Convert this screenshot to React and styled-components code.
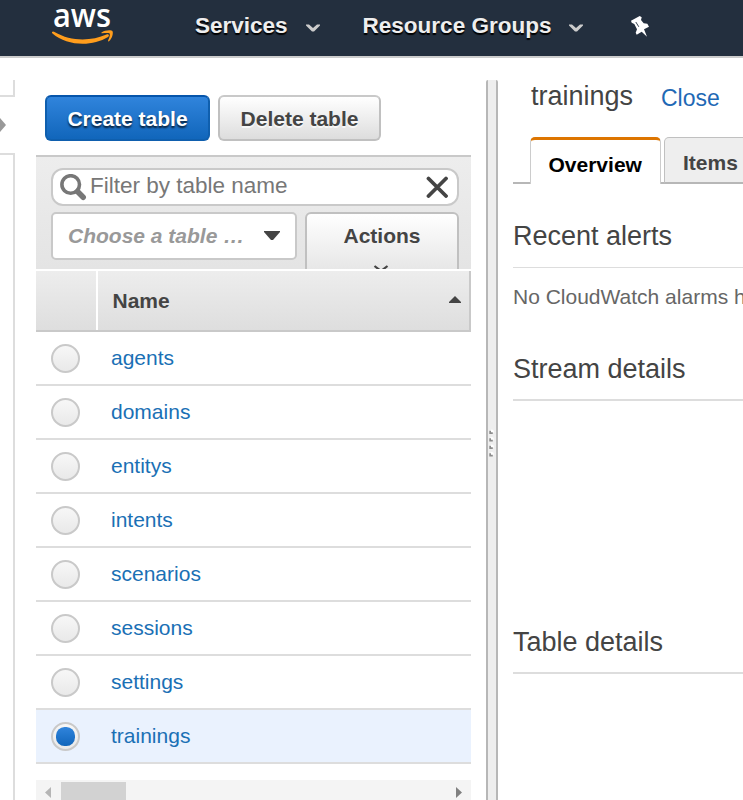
import React from "react";
import styled, { createGlobalStyle, css } from "styled-components";

const GlobalStyle = createGlobalStyle`
  * { box-sizing: border-box; }
  body { margin: 0; background: #fff; overflow: hidden; }
  button, input { font: inherit; }
`;

const Page = styled.div`
  width: 743px;
  height: 800px;
  overflow: hidden;
  background: #fff;
  color: #444;
  font: 21px/24px "Liberation Sans", Arial, sans-serif;
  white-space: nowrap;
`;

const NavBar = styled.header`
  display: flex;
  height: 58px;
  background: #232f3e;
  border-bottom: 2px solid #ccc;
`;

const Logo = styled.svg`
  display: block;
  width: 72px;
  height: 50px;
  margin-left: 48px;
  overflow: visible;
`;

const LogoText = styled.text`
  font: 600 32px "Open Sans", sans-serif;
  fill: #fff;
`;

const NavItem = styled.a`
  display: flex;
  height: 51px;
  margin-left: ${(p) => p.$gap}px;
  color: #eee;
  font-size: 22.5px;
  font-weight: bold;
  line-height: 51px;
  text-shadow: 0 2px 1px #000;
`;

const NavChevron = styled.svg`
  width: 14px;
  height: 8px;
  margin: 24px 0 0 18px;
`;

const PinIcon = styled.svg`
  width: 20px;
  height: 22px;
  margin: 15px 0 0 47px;
`;

const Workspace = styled.div`
  display: grid;
  grid-template-columns: 36px 450px 12px 1fr;
  height: 742px;
`;

const Rail = styled.div`
  display: flex;
  flex-direction: column;
  padding-top: 22px;
`;

const RailTop = styled.div`
  width: 15px;
  height: 17px;
  border: solid #ddd;
  border-width: 0 2px 2px 0;
`;

const RailGap = styled.div`
  display: flex;
  align-items: center;
  height: 56px;
`;

const RailBottom = styled.div`
  width: 15px;
  flex: 1;
  border: solid #ddd;
  border-width: 2px 2px 0 0;
`;

const TablesPane = styled.section`
  padding-top: 37px;
`;

const ButtonRow = styled.div`
  display: flex;
  gap: 8px;
  padding-left: 9px;
`;

const Button = styled.button`
  height: 46px;
  width: ${(p) => p.$width}px;
  padding: 2px 0 0;
  border-radius: 6px;
  font-weight: bold;
  line-height: 40px;
  ${(p) =>
    p.$primary
      ? css`
          color: #fff;
          background: linear-gradient(#3084dc, #1166bb);
          border: 2px solid #0f5fae;
          border-top-color: #0655ab;
          text-shadow: 0 2px 2px rgba(0, 0, 0, 0.75);
        `
      : css`
          color: #444;
          background: linear-gradient(#fff, #ddd);
          border: 2px solid #c0c0c0;
          border-top-color: #c9c9c9;
          text-shadow: 0 2px 0 rgba(255, 255, 255, 0.7);
        `}
`;

const FilterPanel = styled.div`
  display: flex;
  flex-direction: column;
  gap: 6px;
  width: 435px;
  height: 114px;
  margin-top: 14px;
  padding: 11px 12px 0 15px;
  overflow: hidden;
  background: linear-gradient(#ededed, #e4e4e4);
  border-top: 2px solid #c9c9c9;
`;

const SearchBox = styled.label`
  display: flex;
  flex: none;
  width: 408px;
  height: 38px;
  padding-left: 7px;
  background: #fff;
  border: 2px solid #c9c9c9;
  border-radius: 12px;
`;

const SearchIcon = styled.svg`
  width: 27px;
  height: 28px;
  margin-top: 4px;
`;

const SearchInput = styled.input`
  width: 322px;
  height: 32px;
  margin-left: 3px;
  padding: 0;
  border: 0;
  outline: 0;
  background: transparent;
  font-size: 22.5px;
  &::placeholder { color: #777; opacity: 1; }
`;

const ClearIcon = styled.svg`
  width: 22px;
  height: 22px;
  margin: 6px 0 0 14px;
`;

const FilterControls = styled.div`
  display: flex;
  flex: none;
  gap: 8px;
`;

const TagSelect = styled.div`
  display: flex;
  width: 246px;
  height: 48px;
  padding-left: 15px;
  background: #fff;
  border: 2px solid #c9c9c9;
  border-radius: 5px;
  color: #999;
  font-weight: bold;
  font-style: italic;
  line-height: 44px;
`;

const SelectLabel = styled.span`
  width: 196px;
`;

const DownTriangle = styled.svg`
  width: 16px;
  height: 9px;
  margin-top: 17px;
`;

const ActionsButton = styled.button`
  display: flex;
  flex-direction: column;
  align-items: center;
  width: 154px;
  height: 82px;
  padding: 0;
  color: #444;
  background: linear-gradient(#fff, #ddd);
  border: 2px solid #c0c0c0;
  border-radius: 6px;
  font-weight: bold;
  line-height: 44px;
`;

const ActionsChevron = styled.svg`
  width: 16px;
  height: 10px;
  margin: 7px 2px 0 0;
`;

const TableHead = styled.div`
  display: grid;
  grid-template-columns: 60px 1fr;
  gap: 2px;
  width: 435px;
  height: 61px;
  margin-top: 2px;
  border: solid #c9c9c9;
  border-width: 0 2px 2px 0;
`;

const HeadCell = styled.div`
  display: flex;
  align-items: center;
  justify-content: space-between;
  padding: 0 8px 0 14.5px;
  background: linear-gradient(#ededed, #dedede);
  font-weight: bold;
`;

const SortIcon = styled.svg`
  width: 12px;
  height: 7px;
  margin-bottom: 2px;
`;

const Row = styled.label`
  display: grid;
  grid-template-columns: 60px 1fr;
  width: 435px;
  height: 54px;
  padding: 0 0 0 15px;
  background: ${(p) => (p.$selected ? "#eaf2fe" : "#fff")};
  border-bottom: 2px solid #ddd;
`;

const Radio = styled.span`
  display: grid;
  place-items: center;
  width: 29px;
  height: 29px;
  margin-top: 12px;
  border: 2px solid #c9c9c9;
  border-radius: 50%;
  background: linear-gradient(#f7f7f7, #e9e9e9);
`;

const RadioDot = styled.span`
  width: 19px;
  height: 19px;
  border-radius: 45%;
  background: linear-gradient(#3084dc, #1166bb);
`;

const TableLink = styled.a`
  color: #1a70b5;
  line-height: 52px;
`;

const ScrollTrack = styled.div`
  display: flex;
  justify-content: space-between;
  width: 435px;
  height: 24px;
  margin-top: 16px;
  padding: 2px 9px 0 9px;
  background: #f4f4f4;
`;

const ScrollThumb = styled.div`
  width: 65px;
  height: 20px;
  margin: 0 auto 0 10px;
  background: #d2d2d2;
`;

const ScrollArrow = styled.svg`
  width: 6px;
  height: 11px;
  margin-top: 5px;
`;

const Splitter = styled.div`
  display: flex;
  justify-content: flex-start;
  margin-top: 22px;
  background: #eee;
  border: solid #b7b7b7;
  border-width: 0 2px;
  border-radius: 2px 2px 0 0;
`;

const Grip = styled.svg`
  flex: none;
  width: 6px;
  height: 30px;
  margin-top: 349px;
`;

const Details = styled.main`
  overflow: hidden;
  padding: 20px 0 0 15px;
`;

const TitleRow = styled.div`
  display: flex;
  align-items: flex-start;
  height: 58px;
  padding-left: 18px;
`;

const Title = styled.h1`
  margin: 0;
  width: 130px;
  font-size: 27px;
  font-weight: normal;
  line-height: 37px;
`;

const CloseLink = styled.a`
  color: #1f69b5;
  font-size: 23px;
  line-height: 41px;
`;

const Tabs = styled.nav`
  display: flex;
  align-items: flex-end;
  width: 260px;
  height: 48px;
`;

const TabSpacer = styled.div`
  width: ${(p) => p.$width}px;
  height: 2px;
  background: #b7b7b7;
`;

const Tab = styled.a`
  flex: none;
  width: ${(p) => p.$width}px;
  border-radius: 5px 5px 0 0;
  font-weight: bold;
  ${(p) =>
    p.$active
      ? css`
          height: 47px;
          padding-left: 17.5px;
          color: #000;
          background: #fff;
          border: solid #ccc;
          border-width: 3px 1px 0 1px;
          border-top-color: #dd7500;
          line-height: 50px;
        `
      : css`
          height: 47px;
          padding-left: 18px;
          color: #444;
          background: #eee;
          border: 1px solid #c0c0c0;
          border-bottom: 2px solid #b7b7b7;
          line-height: 50px;
        `}
`;

const Section = styled.section`
  height: ${(p) => p.$height}px;
`;

const SectionTitle = styled.h2`
  height: 50px;
  margin: 0;
  border-bottom: ${(p) => p.$rule || 2}px solid #ddd;
  font-size: 27px;
  font-weight: normal;
  line-height: 36px;
`;

const Message = styled.p`
  margin: 17px 0 0;
  color: #666;
`;

const Sections = styled.div`
  padding-top: 34px;
`;

const tables = ["agents", "domains", "entitys", "intents", "scenarios", "sessions", "settings", "trainings"];

function MenuItem({ gap, children }) {
  return (
    <NavItem $gap={gap}>
      {children}
      <NavChevron viewBox="0 0 14 8">
        <path d="M0 .5h3L7 4 11 .5h3v1L8 7.500H6L0 1.500z" fill="#ccc" />
      </NavChevron>
    </NavItem>
  );
}

export default function App() {
  return (
    <Page>
      <GlobalStyle />
      <NavBar>
        <Logo viewBox="0 0 72 50">
          <LogoText x="5" y="26.600" textLength="58" lengthAdjust="spacingAndGlyphs">aws</LogoText>
          <path d="M4 32q1-1 2.500 0c17 10 37 9 52 2.500 2-.8 3.500 1 1.500 2.500C44 47 19 46 4.500 33.500 4 33 3.700 32.500 4 32z" fill="#ff9d1c" />
          <path d="M53.500 32.500c3-2.500 10-3 11-1.300 1 1.500-.3 7.500-3.500 10-.7.500-1.200.2-.9-.6 1-2.200 2.300-5.800 1.500-7-.8-1-4.800-.6-7.300-.3-.9.100-1.200-.3-.8-.8z" fill="#ff9d1c" />
        </Logo>
        <MenuItem gap={75}>Services</MenuItem>
        <MenuItem gap={43}>Resource Groups</MenuItem>
        <PinIcon viewBox="0 0 20 22">
          <path d="M1 5.700 9.700 1l2 1.300L11 5l2.700 3.300 3.600.4L19 11.700l-5 2.600 3 7.400-5.300-5-5 3-1-2L7 14.300 4.300 9 1.700 7.700z" fill="#fff" />
          <path d="m5.800 7 3 4.800" stroke="#232f3e" strokeWidth=".9" />
        </PinIcon>
      </NavBar>
      <Workspace>
        <Rail>
          <RailTop />
          <RailGap>
            <svg width="6" height="14" viewBox="0 0 6 14"><path d="m0 0 6 7-6 7z" fill="#999" /></svg>
          </RailGap>
          <RailBottom />
        </Rail>
        <TablesPane>
          <ButtonRow>
            <Button $primary $width={165}>Create table</Button>
            <Button $width={163}>Delete table</Button>
          </ButtonRow>
          <FilterPanel>
            <SearchBox>
              <SearchIcon viewBox="0 0 27 28">
                <circle cx="10.700" cy="10.500" r="8.800" fill="none" stroke="#777" strokeWidth="3.600" />
                <path d="m17.500 17.500 5.700 5.800" stroke="#777" strokeWidth="5.500" strokeLinecap="round" />
              </SearchIcon>
              <SearchInput placeholder="Filter by table name" />
              <ClearIcon viewBox="0 0 22 22">
                <path d="m2.500 2.500 17.500 17.500M20 2.500 2.500 20" stroke="#444" strokeWidth="3.800" strokeLinecap="round" />
              </ClearIcon>
            </SearchBox>
            <FilterControls>
              <TagSelect>
                <SelectLabel>Choose a table …</SelectLabel>
                <DownTriangle viewBox="0 0 16 9"><path d="M0 0h16v1L9 9H7L0 1z" fill="#444" /></DownTriangle>
              </TagSelect>
              <ActionsButton>
                Actions
                <ActionsChevron viewBox="0 0 16 10"><path d="m1.500 1 6.500 5 6.500-5" fill="none" stroke="#444" strokeWidth="2.200" /></ActionsChevron>
              </ActionsButton>
            </FilterControls>
          </FilterPanel>
          <TableHead>
            <HeadCell />
            <HeadCell>
              Name
              <SortIcon viewBox="0 0 12 7"><path d="m0 7v-1l6-6 6 6v1z" fill="#444" /></SortIcon>
            </HeadCell>
          </TableHead>
          {tables.map((name) => (
            <Row key={name} $selected={name === "trainings"}>
              <Radio>{name === "trainings" && <RadioDot />}</Radio>
              <TableLink>{name}</TableLink>
            </Row>
          ))}
          <ScrollTrack>
            <ScrollArrow viewBox="0 0 6 11"><path d="M6 0v11L0 5.500z" fill="#b5b5b5" /></ScrollArrow>
            <ScrollThumb />
            <ScrollArrow viewBox="0 0 6 11"><path d="M0 0v11l6-5.500z" fill="#808080" /></ScrollArrow>
          </ScrollTrack>
        </TablesPane>
        <Splitter>
          <Grip viewBox="0 0 6 30">
            {[2, 9.5, 17, 24.5].map((y) => (
              <g key={y}>
                <circle cx="3.800" cy={y + 0.5} r="2" fill="#fff" />
                <path d={`M1.300 ${y - 0.3}h1.700v1.500H4.800V${y + 3}H1.300z`} fill="#8c8c8c" />
              </g>
            ))}
          </Grip>
        </Splitter>
        <Details>
          <TitleRow>
            <Title>trainings</Title>
            <CloseLink>Close</CloseLink>
          </TitleRow>
          <Tabs>
            <TabSpacer $width={17} />
            <Tab $active $width={131}>Overview</Tab>
            <TabSpacer $width={3} />
            <Tab $width={100}>Items</Tab>
          </Tabs>
          <Sections>
            <Section $height={133}>
              <SectionTitle $rule={1}>Recent alerts</SectionTitle>
              <Message>No CloudWatch alarms have been triggered for this table.</Message>
            </Section>
            <Section $height={273}>
              <SectionTitle>Stream details</SectionTitle>
            </Section>
            <Section $height={100}>
              <SectionTitle>Table details</SectionTitle>
            </Section>
          </Sections>
        </Details>
      </Workspace>
    </Page>
  );
}
